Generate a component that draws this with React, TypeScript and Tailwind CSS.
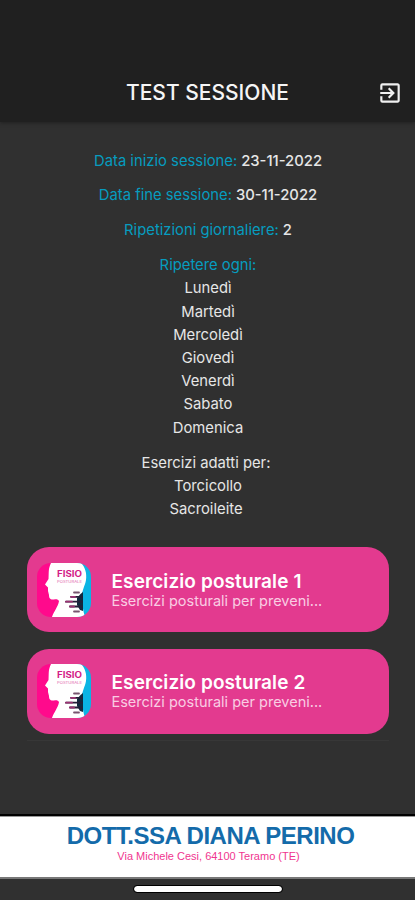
import React from 'react';
import { MdExitToApp } from 'react-icons/md';

interface Exercise {
  id: number;
  title: string;
  description: string;
}

const days = ['Lunedì', 'Martedì', 'Mercoledì', 'Giovedì', 'Venerdì', 'Sabato', 'Domenica'];

const exercises: Exercise[] = [
  { id: 1, title: 'Esercizio posturale 1', description: 'Esercizi posturali per preveni...' },
  { id: 2, title: 'Esercizio posturale 2', description: 'Esercizi posturali per preveni...' },
];

function FisioLogo() {
  return (
    <svg viewBox="0 0 54 54" className="h-[54px] w-[54px] shrink-0 overflow-hidden rounded-[14px]">
      <rect width="27" height="54" fill="#ff0a8c" />
      <rect x="27" width="27" height="54" fill="#0bb4e4" />
      {/* Head profile */}
      <path
        d="M14 0 H44 C48 4 50 10 49 17 C48 23 45 27 45 33 C45 41 46 48 48 54 H15 C17 48 21 44 22 38 C21 36 19 36 17 36.5 C13 37 12 35 12 32 L11 28 L11 24.5 L8 21.5 L11.5 16 C12 10 11 6 14 0 Z"
        fill="#fff"
      />
      {/* Spine */}
      <path d="M46 29 L43.5 31 L40 35 L40 42 L43 47 L46 48 Z" fill="#102b3f" />
      <g stroke="#241f38" strokeWidth="1.8" strokeLinecap="round">
        <path d="M37 29.5 H42" stroke="#77556f" />
        <path d="M34 33.8 H45" />
        <path d="M29 38.7 H45" />
        <path d="M33 43.5 H45" />
        <path d="M37 48.5 H42" stroke="#77556f" />
      </g>
      <path
        d="M29 38.7 H35 M34 33.8 H38 M33 43.5 H37"
        stroke="#9c3273"
        strokeWidth="1.8"
        strokeLinecap="round"
      />
      <text
        x="32.5"
        y="14.3"
        textAnchor="middle"
        textLength="25"
        lengthAdjust="spacingAndGlyphs"
        fontSize="8.4"
        fontWeight="700"
        fill="#d31c86"
      >
        FISIO
      </text>
      <text
        x="32.5"
        y="19.5"
        textAnchor="middle"
        textLength="25"
        lengthAdjust="spacingAndGlyphs"
        fontSize="4"
        fill="#e36bb0"
      >
        POSTURALE
      </text>
    </svg>
  );
}

function InfoRow({ label, value }: { label: string; value?: string }) {
  return (
    <p>
      <span className="text-[#069cbf]">{label}</span>
      {value && <span className="font-medium"> {value}</span>}
    </p>
  );
}

function ExerciseCard({ exercise }: { exercise: Exercise }) {
  return (
    <button
      type="button"
      className="flex h-[85px] w-full items-center rounded-[22px] bg-[#e33a8f] pl-[10px] text-left"
    >
      <FisioLogo />
      <span className="ml-[20.5px] flex flex-col pt-px">
        <span className="text-[19px] leading-[21px] font-semibold tracking-[0.1px] text-white">
          {exercise.title}
        </span>
        <span className="text-[14.5px] leading-[18px] text-[#f9cde3]">{exercise.description}</span>
      </span>
    </button>
  );
}

export default function App() {
  return (
    <div className="flex h-[900px] w-full flex-col overflow-hidden bg-[#303030] font-['Inter','Liberation_Sans',sans-serif]">
      {/* Header */}
      <header className="z-10 grid h-[122px] shrink-0 grid-cols-[50px_1fr_50px] items-end bg-[#202020] pb-[16px] shadow-[0_1px_4px_rgba(0,0,0,0.35)]">
        <span />
        <h1 className="-mb-px text-center text-[21px] leading-[28px] font-medium text-[#f5f5f5]">
          TEST SESSIONE
        </h1>
        <button type="button" className="flex justify-center" aria-label="Esci">
          <MdExitToApp size={26} className="text-[#f0f0f0]" />
        </button>
      </header>

      {/* Session details */}
      <main className="flex flex-1 flex-col pt-[27.6px] pr-[26px] pl-[27px]">
        <section className="flex flex-col gap-[11.7px] text-center text-[14.8px] leading-[23.2px] text-[#e6e6e6]">
          <InfoRow label="Data inizio sessione:" value="23-11-2022" />
          <InfoRow label="Data fine sessione:" value="30-11-2022" />
          <InfoRow label="Ripetizioni giornaliere:" value="2" />
          <div>
            <InfoRow label="Ripetere ogni:" />
            {days.map((day) => (
              <p key={day}>{day}</p>
            ))}
          </div>
          <div>
            <p className="pr-[4px]">Esercizi adatti per:</p>
            <p>Torcicollo</p>
            <p className="pr-[4px]">Sacroileite</p>
          </div>
        </section>

        {/* Exercises */}
        <section className="mt-[25.9px] flex flex-col gap-[16.5px]">
          {exercises.map((exercise) => (
            <ExerciseCard key={exercise.id} exercise={exercise} />
          ))}
        </section>
        <div className="mt-[6px] h-px bg-[#373737]" />
      </main>

      {/* Studio banner */}
      <footer className="shrink-0">
        <div className="h-[65px] border-t-2 border-b-2 border-t-black border-b-[#777777] bg-white pt-[7px] text-center font-['Liberation_Sans',Arial,sans-serif] shadow-[inset_0_1px_0_#999999]">
          <p className="pl-[6px] text-[24px] leading-[26px] font-bold tracking-[-0.5px] text-[#146baa]">
            DOTT.SSA DIANA PERINO
          </p>
          <p className="pl-[2px] text-[11px] leading-[15px] text-[#f0358f]">
            Via Michele Cesi, 64100 Teramo (TE)
          </p>
        </div>
        <div className="flex h-[21px] items-center justify-center pb-[2px]">
          <div className="h-[6px] w-[148px] rounded-full bg-white outline outline-black" />
        </div>
      </footer>
    </div>
  );
}
